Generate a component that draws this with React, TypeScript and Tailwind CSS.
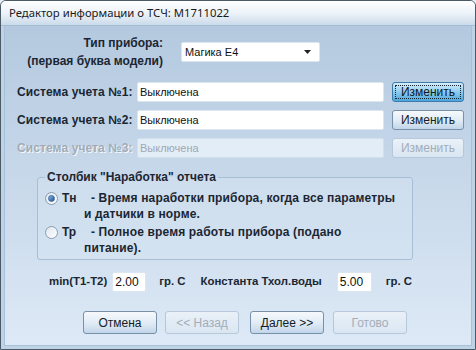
import React from 'react'

const label = "font-['Liberation_Sans',Arial,sans-serif] font-bold text-[12px] text-[#1b2633]"
const field = "font-['Liberation_Sans',Arial,sans-serif] text-[11px]"

type BtnProps = { children: React.ReactNode; kind?: 'normal' | 'focus' | 'disabled'; h?: string; w?: string }

function WinButton({ children, kind = 'normal', h = 'h-[20px]', w = 'w-[72px]' }: BtnProps) {
  const base = `${field} ${h} ${w} shrink-0 rounded-[3px] border flex items-center justify-center text-[12px]`
  if (kind === 'focus') {
    return (
      <button className={`${base} border-[#3d7bab] bg-gradient-to-b from-[#d6eefa] via-[#8ccbee] to-[#4aa6dc] text-[#101820] p-[2px]`}>
        <span className="w-full h-full border border-dotted border-[#1a2430] flex items-center justify-center">{children}</span>
      </button>
    )
  }
  if (kind === 'disabled') {
    return (
      <button className={`${base} border-[#b6c8da] bg-gradient-to-b from-[#eaf1f8] to-[#d9e6f2] text-[#a3adb8]`}>
        {children}
      </button>
    )
  }
  return (
    <button className={`${base} border-[#7890a8] bg-gradient-to-b from-[#f6f9fc] via-[#e2ecf6] to-[#c2d6ea] text-[#141c24]`}>
      {children}
    </button>
  )
}

function SystemRow({ n, disabled, focus }: { n: number; disabled?: boolean; focus?: boolean }) {
  return (
    <div className="flex items-center h-[20px]">
      <div
        className={`${label} w-[120px] whitespace-nowrap tracking-[0.1px] ${disabled ? 'text-[#a3abb4] [text-shadow:1px_1px_0_#f4f8fc]' : ''}`}
      >
        Система учета №{n}:
      </div>
      <div
        className={`${field} w-[247px] h-[20px] rounded-[2px] border flex items-center pl-[2px] ${
          disabled ? 'bg-[#e3edf7] border-[#d3dfeb] text-[#9fa8b2]' : 'bg-white border-[#dde6ef] text-[#101010]'
        }`}
      >
        Выключена
      </div>
      <div className="ml-[8px]">
        <WinButton kind={disabled ? 'disabled' : focus ? 'focus' : 'normal'}>Изменить</WinButton>
      </div>
    </div>
  )
}

function Radio({ checked }: { checked?: boolean }) {
  return (
    <span className="w-[13px] h-[13px] rounded-full border border-[#8b9db0] bg-gradient-to-br from-[#dfe6ee] to-[#ffffff] flex items-center justify-center shrink-0">
      {checked && <span className="w-[7px] h-[7px] rounded-full bg-gradient-to-br from-[#8fb7e4] to-[#1f4f8f] border border-[#3a6aa8]" />}
    </span>
  )
}

function Option({ code, lines, checked }: { code: string; lines: string[]; checked?: boolean }) {
  return (
    <div className="flex">
      <div className="flex items-center h-[16px]">
        <Radio checked={checked} />
      </div>
      <div className={`${label} w-[22px] ml-[4px] leading-[16px]`}>{code}</div>
      <div className={`${label} leading-[16px] tracking-[0.15px]`}>
        {lines.map((l, i) => (
          <div key={i} className="whitespace-pre">{i === 0 ? '  ' + l : l}</div>
        ))}
      </div>
    </div>
  )
}

export default function App() {
  const numBox =
    "font-['Liberation_Sans',Arial,sans-serif] h-[20px] bg-white rounded-[2px] border border-[#dce6f0] flex items-center pl-[2px] text-[12px] font-normal text-[#101010]"
  return (
    <div className="w-[476px] h-[350px] bg-[#e8eef4] overflow-hidden">
      <div className="w-full h-full flex flex-col rounded-t-[6px] border border-[#4c5a68] bg-[#bfd3e7]">
        {/* title bar */}
        <div className="h-[25px] shrink-0 rounded-t-[5px] bg-gradient-to-b from-[#ffffff] via-[#edf3f9] to-[#cbdbea] border-b border-[#a4bdd5] flex items-center pl-[8px]">
          <span className="font-['Noto_Sans',sans-serif] text-[11.3px] text-[#1a1a1a] leading-none">
            Редактор информации о ТСЧ: М1711022
          </span>
        </div>

        <div className="flex-1 flex flex-col px-[3px] pb-[3px]">
          <div className="flex-1 flex flex-col bg-gradient-to-b from-[#b4c9df] to-[#dde9f6] border-x border-b border-[#a9c1d8]">
            {/* device type */}
            <div className="flex items-center pt-[8px]">
              <div className={`${label} w-[158px] text-right leading-[18px]`}>
                <div>Тип прибора:</div>
                <div>(первая буква модели)</div>
              </div>
              <div className="ml-[18px] w-[139px] h-[20px] bg-white rounded-[2px] border border-[#dce6f0] flex items-center justify-between pl-[3px] pr-[8px]">
                <span className={`${field} text-[#101010]`}>Магика Е4</span>
                <svg width="7" height="4" viewBox="0 0 7 4">
                  <path d="M0 0h7L3.5 4z" fill="#222" />
                </svg>
              </div>
            </div>

            {/* systems */}
            <div className="flex flex-col gap-[8px] mt-[12px] pl-[12px]">
              <SystemRow n={1} focus />
              <SystemRow n={2} />
              <SystemRow n={3} disabled />
            </div>

            {/* group */}
            <fieldset className="ml-[32px] w-[376px] mt-[12px] border border-[#a7bfd6] rounded-[3px] px-[7px] pb-[3px] bg-[#d6e5f3]/40">
              <legend className={`${label} px-[2px] leading-[14px]`}>Столбик "Наработка" отчета</legend>
              <div className="flex flex-col gap-[2px] mt-[6px]">
                <Option checked code="Тн" lines={['- Время наработки прибора, когда все параметры', 'и датчики в норме.']} />
                <Option code="Тр" lines={['- Полное время работы прибора (подано', 'питание).']} />
              </div>
            </fieldset>

            {/* constants */}
            <div className="flex items-center mt-[12px] pl-[44px] font-['Liberation_Sans',Arial,sans-serif] font-bold text-[11.4px] text-[#1b2633]">
              <span>min(T1-T2)</span>
              <span className={`${numBox} ml-[5px] w-[34px]`}>2.00</span>
              <span className="ml-[13px]">гр. С</span>
              <span className="ml-[15px]">Константа Тхол.воды</span>
              <span className={`${numBox} ml-[15px] w-[35px]`}>5.00</span>
              <span className="ml-[14px]">гр. С</span>
            </div>

            {/* buttons */}
            <div className="flex items-center mt-[19px] pl-[78px]">
              <WinButton h="h-[23px]" w="w-[74px]">Отмена</WinButton>
              <div className="ml-[8px]">
                <WinButton kind="disabled" h="h-[23px]" w="w-[74px]">&lt;&lt; Назад</WinButton>
              </div>
              <div className="ml-[11px]">
                <WinButton h="h-[23px]" w="w-[74px]">Далее &gt;&gt;</WinButton>
              </div>
              <div className="ml-[9px]">
                <WinButton kind="disabled" h="h-[23px]" w="w-[74px]">Готово</WinButton>
              </div>
            </div>
          </div>
        </div>
      </div>
    </div>
  )
}
